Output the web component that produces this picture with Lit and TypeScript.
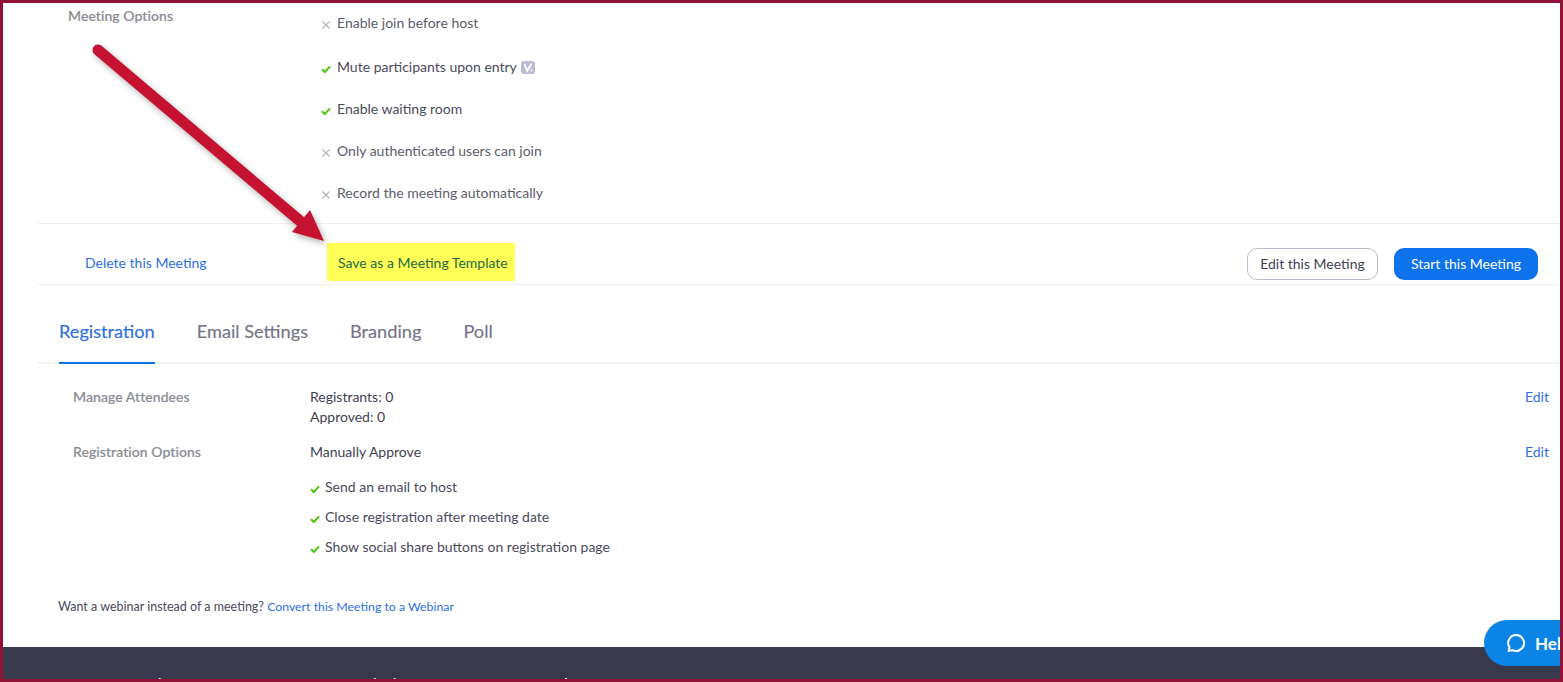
import { LitElement, html, css, svg } from "lit";
import { customElement } from "lit/decorators.js";

const check = html`<svg class="ic" width="10" height="10" viewBox="0 0 10 10"><path d="M1 5.2 L3.8 8 L9 2.4" fill="none" stroke="#4fc40a" stroke-width="2"/></svg>`;
const cross = html`<svg class="ic" width="10" height="10" viewBox="0 0 10 10"><path d="M1.5 1.5 L8.5 8.5 M8.5 1.5 L1.5 8.5" fill="none" stroke="#b5b5bd" stroke-width="1.3"/></svg>`;

@customElement("app-root")
export class AppRoot extends LitElement {
  static styles = css`
    :host { display: block; width: 1563px; height: 682px; font-family: "Lato", "Liberation Sans", sans-serif; font-size: 14px; color: #4a4a5c; background: #fff; }
    .frame { position: relative; box-sizing: border-box; width: 1563px; height: 682px; border: 3px solid #8f1234; overflow: hidden; display: flex; flex-direction: column; background: #fff; }
    .main { flex: 0 0 644px; display: flex; flex-direction: column; }
    .meeting { display: flex; height: 220px; padding-left: 65px; box-sizing: border-box; }
    .label { color: #8c8c96; font-weight: 500; letter-spacing: 0.07px; -webkit-text-stroke: 0.2px #8c8c96; }
    .m-label { width: 253px; padding-top: 4px; line-height: 18px; }
    .opts { display: flex; flex-direction: column; padding-top: 11px; }
    .opt { display: flex; align-items: center; gap: 6px; height: 18px; margin-bottom: 24px; line-height: 18px; color: #5c5c6c; }
    .opt.first { margin-bottom: 26px; }
    .opt .ic { margin-top: 3px; }
    .opt.on { color: #4a4a5c; }
    .badge { width: 14px; height: 13px; margin-left: -2px; }
    .actions { margin-left: 35px; height: 62px; box-sizing: border-box; border-top: 1px solid #ededf2; border-bottom: 1px solid #ededf2; display: flex; align-items: center; padding: 18px 22px 0 0; }
    a { color: #2d6fe3; text-decoration: none; }
    .del { margin: 0 0 2px 47px; width: 242px; }
    .tpl { background: #ffff55; height: 38px; width: 188px; box-sizing: border-box; padding-left: 11px; line-height: 40px; color: #1f6a4a; margin-bottom: 2px; }
    .spacer { flex: 1; }
    .btn { height: 32px; box-sizing: border-box; border-radius: 10px; display: flex; align-items: center; justify-content: center; font-size: 14px; margin-top: 2px; padding-bottom: 2px; }
    .edit { width: 131px; border: 1px solid #bab8cf; color: #3f3f52; margin-right: 16px; }
    .start { width: 144px; background: #0e72ed; color: #fff; }
    .tabs { margin-left: 35px; height: 79px; box-sizing: border-box; border-bottom: 2px solid #f3f3f6; display: flex; padding-left: 21px; gap: 42px; font-size: 18.2px; color: #747487; -webkit-text-stroke: 0.15px currentColor; }
    .tab { height: 79px; box-sizing: border-box; padding-top: 34px; line-height: 24px; }
    .tab.active { color: #2d6fe3; border-bottom: 2px solid #0e72ed; }
    .rows { padding: 23px 11px 0 70px; display: flex; flex-direction: column; color: #3f3f52; }
    .row { display: flex; line-height: 20px; }
    .r-label { width: 237px; }
    .r-body { flex: 1; }
    .row.second { margin-top: 15px; }
    .subs { display: flex; flex-direction: column; margin-top: 15px; gap: 10px; padding-left: 237px; }
    .sub { display: flex; align-items: center; gap: 5px; line-height: 20px; color: #4a4a5c; }
    .sub .ic { margin-top: 3px; }
    .webinar { padding: 41px 0 0 55px; font-size: 12.5px; line-height: 18px; color: #4a4a5c; }
    .webinar a { font-size: 12.3px; }
    .footer { flex: 1; background: #39394d; display: flex; padding-left: 147px; color: #fff; font-weight: 700; font-size: 12px; line-height: 18px; }
    .foot { padding-top: 27px; flex: none; }
    .foot:nth-child(1) { width: 191px; }
    .foot:nth-child(2) { width: 211px; }
    .foot:nth-child(3) { width: 200px; }
    .foot:nth-child(4) { width: 200px; }
    .arrow { position: absolute; left: -3px; top: -3px; pointer-events: none; filter: drop-shadow(2px 3px 3px rgba(0,0,0,0.3)); }
    .help { position: absolute; left: 1481px; top: 617px; width: 100px; height: 46px; border-radius: 23px 0 0 23px; background: #0b85e5; color: #fff; font-weight: 700; font-size: 17px; display: flex; align-items: center; padding-left: 22px; gap: 9px; box-sizing: border-box; }
  `;

  render() {
    return html`<div class="frame">
      <div class="main">
        <section class="meeting">
          <div class="label m-label">Meeting Options</div>
          <div class="opts">
            <div class="opt first">${cross}<span>Enable join before host</span></div>
            <div class="opt on">${check}<span>Mute participants upon entry</span>
              <svg class="badge" viewBox="0 0 14 13"><rect width="14" height="13" rx="3" fill="#bdbbd3"/><path d="M3.5 3 L6.2 10 L10.5 2.5" fill="none" stroke="#fff" stroke-width="1.8"/><circle cx="10.5" cy="9.5" r="1" fill="#fff"/></svg>
            </div>
            <div class="opt on">${check}<span>Enable waiting room</span></div>
            <div class="opt">${cross}<span>Only authenticated users can join</span></div>
            <div class="opt">${cross}<span>Record the meeting automatically</span></div>
          </div>
        </section>
        <section class="actions">
          <a class="del">Delete this Meeting</a>
          <div class="tpl">Save as a Meeting Template</div>
          <div class="spacer"></div>
          <div class="btn edit">Edit this Meeting</div>
          <div class="btn start">Start this Meeting</div>
        </section>
        <nav class="tabs">
          <div class="tab active">Registration</div>
          <div class="tab">Email Settings</div>
          <div class="tab">Branding</div>
          <div class="tab">Poll</div>
        </nav>
        <section class="rows">
          <div class="row">
            <div class="label r-label">Manage Attendees</div>
            <div class="r-body">Registrants: 0<br />Approved: 0</div>
            <a>Edit</a>
          </div>
          <div class="row second">
            <div class="label r-label">Registration Options</div>
            <div class="r-body">Manually Approve</div>
            <a>Edit</a>
          </div>
          <div class="subs">
            <div class="sub">${check}<span>Send an email to host</span></div>
            <div class="sub">${check}<span>Close registration after meeting date</span></div>
            <div class="sub">${check}<span>Show social share buttons on registration page</span></div>
          </div>
        </section>
        <div class="webinar">Want a webinar instead of a meeting? <a>Convert this Meeting to a Webinar</a></div>
      </div>
      <footer class="footer">
        <div class="foot">About</div>
        <div class="foot">Download</div>
        <div class="foot">Sales</div>
        <div class="foot">Support</div>
        <div class="foot">Language</div>
      </footer>
      <svg class="arrow" width="340" height="260" viewBox="0 0 340 260">
        ${svg`<path d="M98 50 L300 221" stroke="#c41230" stroke-width="11" stroke-linecap="round" fill="none"/>
        <path d="M310 210 L324 241 L292 232 Z" fill="#c41230"/>`}
      </svg>
      <div class="help">
        <svg width="20" height="20" viewBox="0 0 20 20"><path d="M10 2 a8 8 0 1 1 -3.6 15.1 L2.5 18 L3.6 14.5 A8 8 0 0 1 10 2 Z" fill="none" stroke="#fff" stroke-width="2" stroke-linejoin="round"/></svg>
        <span>Help</span>
      </div>
    </div>`;
  }
}
